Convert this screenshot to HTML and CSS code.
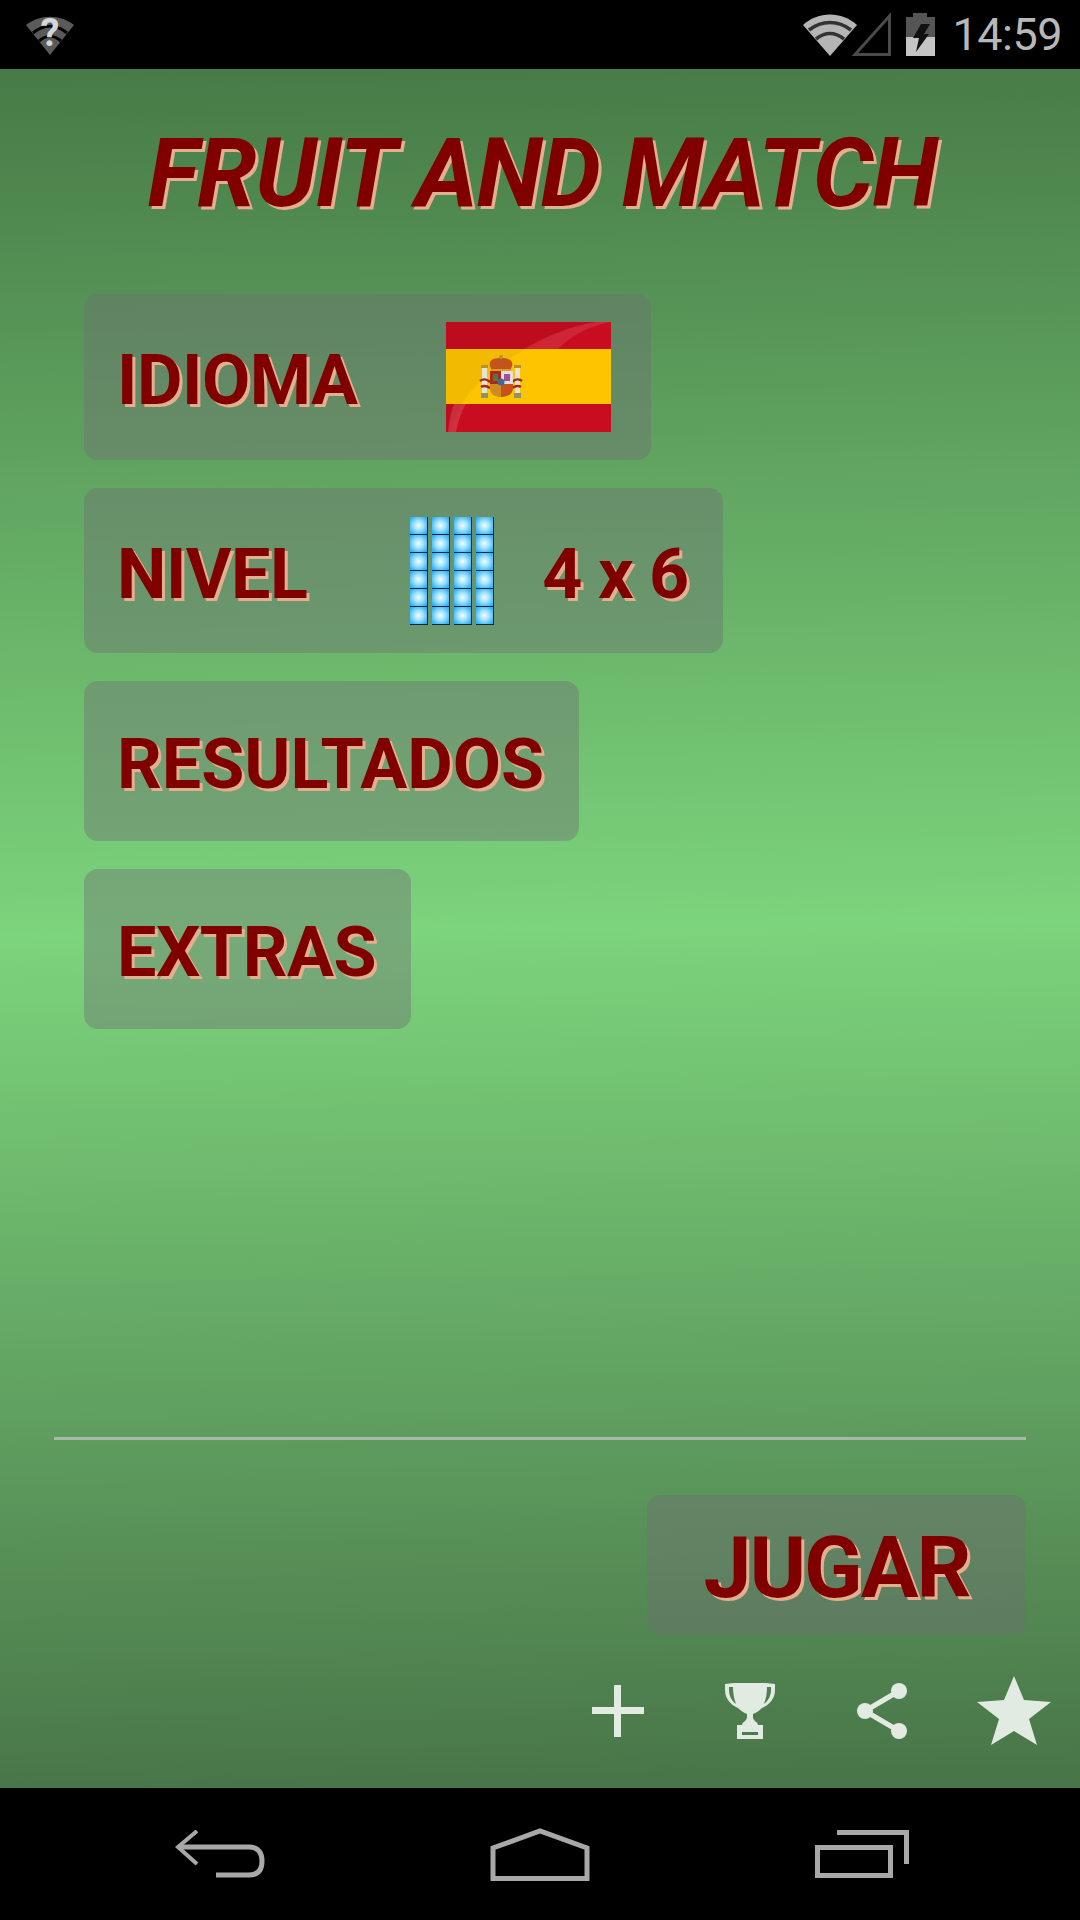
FILE: index.html
```html
<!DOCTYPE html>
<html lang="es">
<head>
  <meta charset="UTF-8">
  <meta name="viewport" content="width=device-width, initial-scale=1.0">
  <title>Fruit and Match</title>
  <link rel="stylesheet" href="styles.css">
</head>
<body>
  <header class="status-bar">
    <svg class="status-unknown" width="48" height="40" viewBox="0 0 48 40">
      <path d="M0 10C14 -1 34 -1 48 10L24 40Z" fill="#5a5a5a"/>
      <path d="M7 18C18 9 30 9 41 18M13 26C20 20 28 20 35 26" fill="none" stroke="#000" stroke-width="3"/>
      <text x="24" y="31" text-anchor="middle" class="status-unknown-mark">?</text>
    </svg>
    <div class="status-right">
      <svg class="status-wifi" width="54" height="42" viewBox="0 0 54 42">
        <path d="M0 11C15 -3 39 -3 54 11L27 42Z" fill="#b5b5b5"/>
        <path d="M6 16C19 6 35 6 48 16M13 25C22 18 32 18 41 25" fill="none" stroke="#333" stroke-width="3.5"/>
      </svg>
      <svg class="status-signal" width="40" height="43" viewBox="0 0 40 43">
        <path d="M38.5 3V41.500H4Z" fill="none" stroke="#4a4a4a" stroke-width="3"/>
      </svg>
      <svg class="status-battery" width="29" height="43" viewBox="0 0 29 43">
        <path d="M7 0H21V4H29V43H0V4H7Z" fill="#555"/>
        <rect y="24" width="29" height="19" fill="#c4c4c4"/>
        <path d="M15 11H24L18 21H23L10 39L13 25H7Z" fill="#111"/>
      </svg>
      <span class="clock">14:59</span>
    </div>
  </header>

  <main class="screen">
    <h1 class="title">FRUIT AND MATCH</h1>

    <nav class="menu">
      <div class="menu-btn">
        <span class="btn-label btn-label-tight">IDIOMA</span>
        <svg class="flag" width="165" height="110" viewBox="0 0 165 110">
          <rect width="165" height="110" fill="#c90d21"/>
          <rect y="27" width="165" height="55" fill="#ffc400"/>
          <path d="M0 0H150C105 8 60 35 30 64C16 78 8 94 4 110H0Z" fill="#000" opacity="0.05"/>
          <!-- brillo -->
          <path d="M150 0C125 4 100 14 78 27H112C125 14 140 5 165 0Z" fill="#fff" opacity="0.1"/>
          <path d="M8 82C5 90 3 100 2 110H10C12 100 15 90 20 82Z" fill="#fff" opacity="0.14"/>
          <!-- escudo -->
          <path d="M36 46H41V72H36ZM69 46H74V72H69Z" fill="#e6e2da"/>
          <path d="M35 71H42V76H35ZM68 71H75V76H68Z" fill="#8d9460"/>
          <path d="M35 43H42V46H35ZM68 43H75V46H68Z" fill="#b8902c"/>
          <path d="M34 59C38 56 42 58 44 60M76 59C72 56 68 58 66 60M35 65C38 63 41 64 44 66M75 65C72 63 69 64 66 66" fill="none" stroke="#9c2a1c" stroke-width="2.500"/>
          <path d="M44 44C42 37 50 36 55 36C60 36 68 37 66 44L64 49H46Z" fill="#c2541c"/>
          <path d="M46 47H64V49H46Z" fill="#d8a020"/>
          <circle cx="55" cy="35" r="2" fill="#b8902c"/>
          <path d="M44 49H55V62H44Z" fill="#a82a1c"/>
          <path d="M55 49H67V62H55Z" fill="#e4dce0"/>
          <path d="M58 52H64V59H58Z" fill="#a0509a"/>
          <path d="M47 52H52V59H47Z" fill="#4e7a3c"/>
          <path d="M44 62H55V75C50 75 44 73 44 66Z" fill="#d08a20"/>
          <path d="M55 62H67V66C67 73 60 75 55 75Z" fill="#c8501c"/>
          <circle cx="55" cy="60" r="3.500" fill="#3c6a90"/>
        </svg>
      </div>

      <div class="menu-btn menu-btn-level">
        <span class="btn-label btn-label-tight">NIVEL</span>
        <div class="level-grid" id="levelGrid"></div>
        <span class="btn-label level-value">4 x 6</span>
      </div>

      <div class="menu-btn menu-btn-short">
        <span class="btn-label">RESULTADOS</span>
      </div>

      <div class="menu-btn menu-btn-short">
        <span class="btn-label btn-label-tight">EXTRAS</span>
      </div>
    </nav>

    <div class="footer-area">
      <hr class="divider">
      <div class="play-row">
        <button class="play-btn">JUGAR</button>
      </div>
      <div class="tool-row">
        <div class="tool-cell">
          <svg width="52" height="52" viewBox="0 0 52 52"><path d="M22 0h7v22h23v7H29v23h-7V29H0v-7h22z" fill="#e2ebe2"/></svg>
        </div>
        <div class="tool-cell">
          <svg width="50" height="56" viewBox="0 0 50 56">
            <path d="M9 0H41L50 1V7C50 16 44 22 37 25C34 28 31 30 28 31V34C28 38 33 39 33 42H38V56H12V42H17C17 39 22 38 22 34V31C19 30 16 28 13 25C6 22 0 16 0 7V1ZM4 4V7C4 13 7 18 11 21C9 16 8 10 8 4ZM46 4H42C42 10 41 16 39 21C43 18 46 13 46 7ZM17 49V52H33V49Z" fill="#e2ebe2" fill-rule="evenodd"/>
          </svg>
        </div>
        <div class="tool-cell">
          <svg width="50" height="56" viewBox="0 0 50 56">
            <path d="M8 28L42 8M8 28L42 48" stroke="#e2ebe2" stroke-width="5" fill="none"/>
            <circle cx="8" cy="28" r="8" fill="#e2ebe2"/>
            <circle cx="42" cy="8" r="8" fill="#e2ebe2"/>
            <circle cx="42" cy="48" r="8" fill="#e2ebe2"/>
          </svg>
        </div>
        <div class="tool-cell">
          <svg width="74" height="70" viewBox="0 0 74 70"><path d="M37 0L47 24L74 26L52 43L60 69L37 55L14 69L22 43L0 26L27 24Z" fill="#e2ebe2"/></svg>
        </div>
      </div>
    </div>
  </main>

  <footer class="nav-bar">
    <div class="nav-cell">
      <svg width="90" height="48" viewBox="0 0 90 48">
        <path d="M22 1L3 17L22 34" fill="none" stroke="#a8a8a8" stroke-width="4"/>
        <path d="M3 17H74C84 17 87 24 87 31C87 39 84 45 74 45H41" fill="none" stroke="#a8a8a8" stroke-width="5"/>
      </svg>
    </div>
    <div class="nav-cell">
      <svg width="100" height="53" viewBox="0 0 100 53">
        <path d="M3 50.500V20L50 3L97 20V50.500Z" fill="none" stroke="#a8a8a8" stroke-width="5"/>
      </svg>
    </div>
    <div class="nav-cell nav-cell-recent">
      <svg width="94" height="48" viewBox="0 0 94 48">
        <path d="M22 2.500H91.500V34" fill="none" stroke="#a8a8a8" stroke-width="5"/>
        <rect x="2.500" y="17.500" width="73" height="28" fill="none" stroke="#a8a8a8" stroke-width="5"/>
      </svg>
    </div>
  </footer>

  <script>
    // cuadricula del nivel, 4 columnas x 6 filas
    var levelGrid = document.getElementById('levelGrid');
    for (var i = 0; i < 24; i++) {
      var cell = document.createElement('div');
      cell.className = 'level-cell';
      levelGrid.appendChild(cell);
    }
  </script>
</body>
</html>
```

FILE: styles.css
```css
* { box-sizing: border-box; margin: 0; padding: 0; }
body {
  width: 1080px;
  height: 1920px;
  display: flex;
  flex-direction: column;
  font-family: Roboto, 'Liberation Sans', sans-serif;
  background: #000;
  overflow: hidden;
}

/* status bar */
.status-bar { height: 69px; flex: none; background: #000; display: flex; justify-content: space-between; align-items: center; padding: 0 18px 0 26px; }
.status-unknown { margin-top: 1px; overflow: visible; }
.status-unknown-mark { font-family: Roboto, sans-serif; font-size: 38px; font-weight: 700; fill: #d6d6d6; }
.status-right { display: flex; align-items: center; }
.status-signal { margin-left: -6px; }
.status-battery { margin-left: 15px; }
.clock { margin-left: 17px; font-size: 45px; font-weight: 400; letter-spacing: -0.5px; color: #b8b8b8; line-height: 1; }

/* main */
.screen {
  flex: 1;
  display: flex;
  flex-direction: column;
  background: linear-gradient(179deg, #477a47 0%, #7cd47c 50%, #487448 100%);
}
.title {
  height: 225px;
  padding: 47px 0 0 4px;
  text-align: center;
  font-size: 96px;
  font-weight: 700;
  font-style: italic;
  letter-spacing: -1.5px;
  line-height: 115px;
  color: #800000;
  text-shadow: 3px 3px 0 #e3b08f;
}
.menu { padding-left: 84px; display: flex; flex-direction: column; align-items: flex-start; gap: 28px; }
.menu-btn {
  min-height: 166px;
  display: flex;
  align-items: center;
  padding: 0 35px 0 33px;
  border-radius: 14px;
  background: rgba(112, 112, 116, 0.42);
}
.menu-btn-level { min-height: 165px; }
.menu-btn-short { min-height: 160px; }
.btn-label {
  padding-top: 6px;
  font-size: 70px;
  font-weight: 700;
  line-height: 82px;
  color: #800000;
  text-shadow: 3px 3px 0 #e3b08f;
}
.btn-label-tight { letter-spacing: -0.5px; }
.flag { margin-left: 88px; margin-right: 5px; }
.level-grid {
  margin-left: 103px;
  display: grid;
  grid-template-columns: repeat(4, 18px);
  grid-auto-rows: 18px;
  column-gap: 4px;
}
.level-cell {
  background: radial-gradient(circle, #f4fcff 0%, #a4e4ff 38%, #2cb0f4 88%);
  border-right: 1px solid #04283c;
  border-bottom: 1px solid #04283c;
}
.level-value { margin-left: 48px; letter-spacing: -1px; }

/* bottom */
.footer-area { margin-top: auto; }
.divider { margin: 0 54px; border: none; height: 3px; background: #a9b8a9; }
.play-row { display: flex; justify-content: flex-end; padding: 55px 54px 0 0; }
.play-btn {
  width: 379px;
  height: 139px;
  padding-top: 6px;
  border: none;
  border-radius: 14px;
  background: rgba(112, 112, 116, 0.42);
  font-family: inherit;
  font-size: 86px;
  font-weight: 700;
  letter-spacing: -2px;
  color: #800000;
  text-shadow: 3px 3px 0 #e3b08f;
}
.tool-row { display: flex; justify-content: flex-end; height: 154px; }
.tool-cell { width: 132px; display: flex; align-items: center; justify-content: center; }

/* nav */
.nav-bar { height: 132px; flex: none; background: #000; display: flex; justify-content: center; align-items: center; }
.nav-cell { width: 320px; display: flex; justify-content: center; }
.nav-cell-recent { padding-left: 4px; }
```
